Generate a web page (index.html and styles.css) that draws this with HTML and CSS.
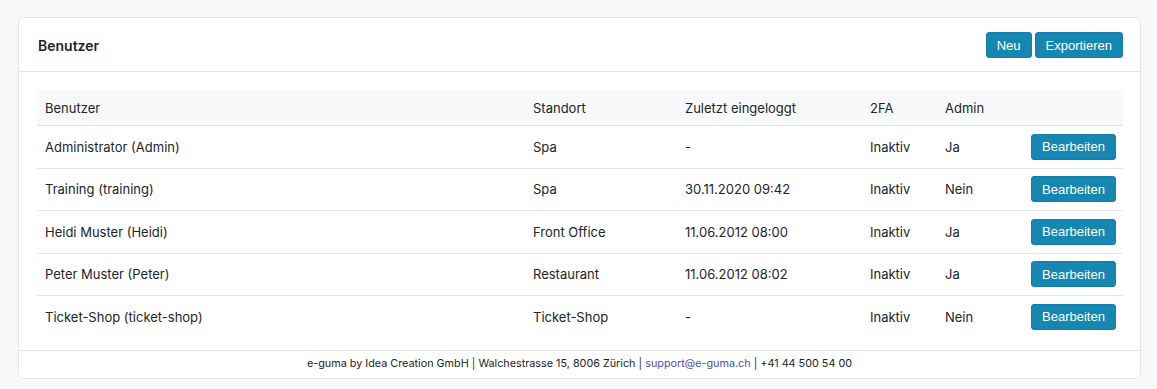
FILE: index.html
```html
<!DOCTYPE html>
<html lang="de">
<head>
  <meta charset="UTF-8" />
  <meta name="viewport" content="width=device-width, initial-scale=1.0"/>
  <title>Benutzer</title>
  <link rel="stylesheet" href="styles.css">
</head>
<body>

<div class="card">
  <div class="card-header">
    <h1>Benutzer</h1>
    <div class="actions">
      <button class="btn">Neu</button>
      <button class="btn">Exportieren</button>
    </div>
  </div>

  <div class="card-body">
    <table class="users">
      <colgroup>
        <col class="c-user">
        <col class="c-site">
        <col class="c-login">
        <col class="c-2fa">
        <col class="c-admin">
        <col class="c-edit">
      </colgroup>
      <thead>
        <tr>
          <th>Benutzer</th>
          <th>Standort</th>
          <th>Zuletzt eingeloggt</th>
          <th>2FA</th>
          <th>Admin</th>
          <th></th>
        </tr>
      </thead>
      <tbody>
        <tr>
          <td>Administrator (Admin)</td>
          <td>Spa</td>
          <td>-</td>
          <td>Inaktiv</td>
          <td>Ja</td>
          <td class="edit"><button class="btn">Bearbeiten</button></td>
        </tr>
        <tr>
          <td>Training (training)</td>
          <td>Spa</td>
          <td>30.11.2020 09:42</td>
          <td>Inaktiv</td>
          <td>Nein</td>
          <td class="edit"><button class="btn">Bearbeiten</button></td>
        </tr>
        <tr>
          <td>Heidi Muster (Heidi)</td>
          <td>Front Office</td>
          <td>11.06.2012 08:00</td>
          <td>Inaktiv</td>
          <td>Ja</td>
          <td class="edit"><button class="btn">Bearbeiten</button></td>
        </tr>
        <tr>
          <td>Peter Muster (Peter)</td>
          <td>Restaurant</td>
          <td>11.06.2012 08:02</td>
          <td>Inaktiv</td>
          <td>Ja</td>
          <td class="edit"><button class="btn">Bearbeiten</button></td>
        </tr>
        <tr>
          <td>Ticket-Shop (ticket-shop)</td>
          <td>Ticket-Shop</td>
          <td>-</td>
          <td>Inaktiv</td>
          <td>Nein</td>
          <td class="edit"><button class="btn">Bearbeiten</button></td>
        </tr>
      </tbody>
    </table>
  </div>

  <div class="card-footer">
    e-guma by Idea Creation GmbH <span class="sep">|</span> Walchestrasse 15, 8006 Zürich <span class="sep">|</span> <a href="#">support@e-guma.ch</a> <span class="sep">|</span> +41 44 500 54 00
  </div>
</div>

</body>
</html>
```

FILE: styles.css
```css
body {
  font-family: 'Inter', 'Noto Sans', sans-serif;
  background: #f8f8fa;
  color: #212529;
  margin: 0;
  padding: 17px 16px 0 18px;
}
.card {
  background: white;
  border: 1px solid #e3e4e8;
  border-radius: 6px;
}
.card-header {
  display: flex;
  justify-content: space-between;
  align-items: center;
  padding: 14px 17px 13px 19px;
  border-bottom: 1px solid #e3e4e8;
}
h1 {
  font-size: 14px;
  font-weight: 600;
  margin: 0;
}
.actions {
  display: flex;
  gap: 3px;
}
.btn {
  font-family: 'Liberation Sans', Arial, sans-serif;
  font-size: 13px;
  background-color: #1587b0;
  border: 1px solid #137fa6;
  color: white;
  height: 26px;
  padding: 0 10px;
  border-radius: 3px;
  cursor: pointer;
}
.card-body {
  padding: 18px 17px 12px 18px;
}
.users {
  width: 100%;
  border-collapse: collapse;
  table-layout: fixed;
  font-size: 13px;
}
.c-user { width: 488px; }
.c-site { width: 152px; }
.c-login { width: 185px; }
.c-2fa { width: 75px; }
.c-admin { width: 86px; }
.c-edit { width: 100px; }
th {
  background: #f8f9fa;
  text-align: left;
  font-weight: 400;
  height: 35px;
  padding: 0 8px;
  border-bottom: 1px solid #e3e4e8;
}
td {
  padding: 7.5px 8px 8px;
  height: 26px;
  border-bottom: 1px solid #e6e7ea;
}
tbody tr:last-child td {
  border-bottom: none;
}
td.edit {
  text-align: right;
}
.card-footer {
  border-top: 1px solid #e3e4e8;
  text-align: center;
  font-size: 10.8px;
  padding: 6px 0 7px;
  line-height: 14px;
}
.card-footer a {
  color: #4b4fa8;
  text-decoration: none;
}
.sep {
  color: #333;
}
```
